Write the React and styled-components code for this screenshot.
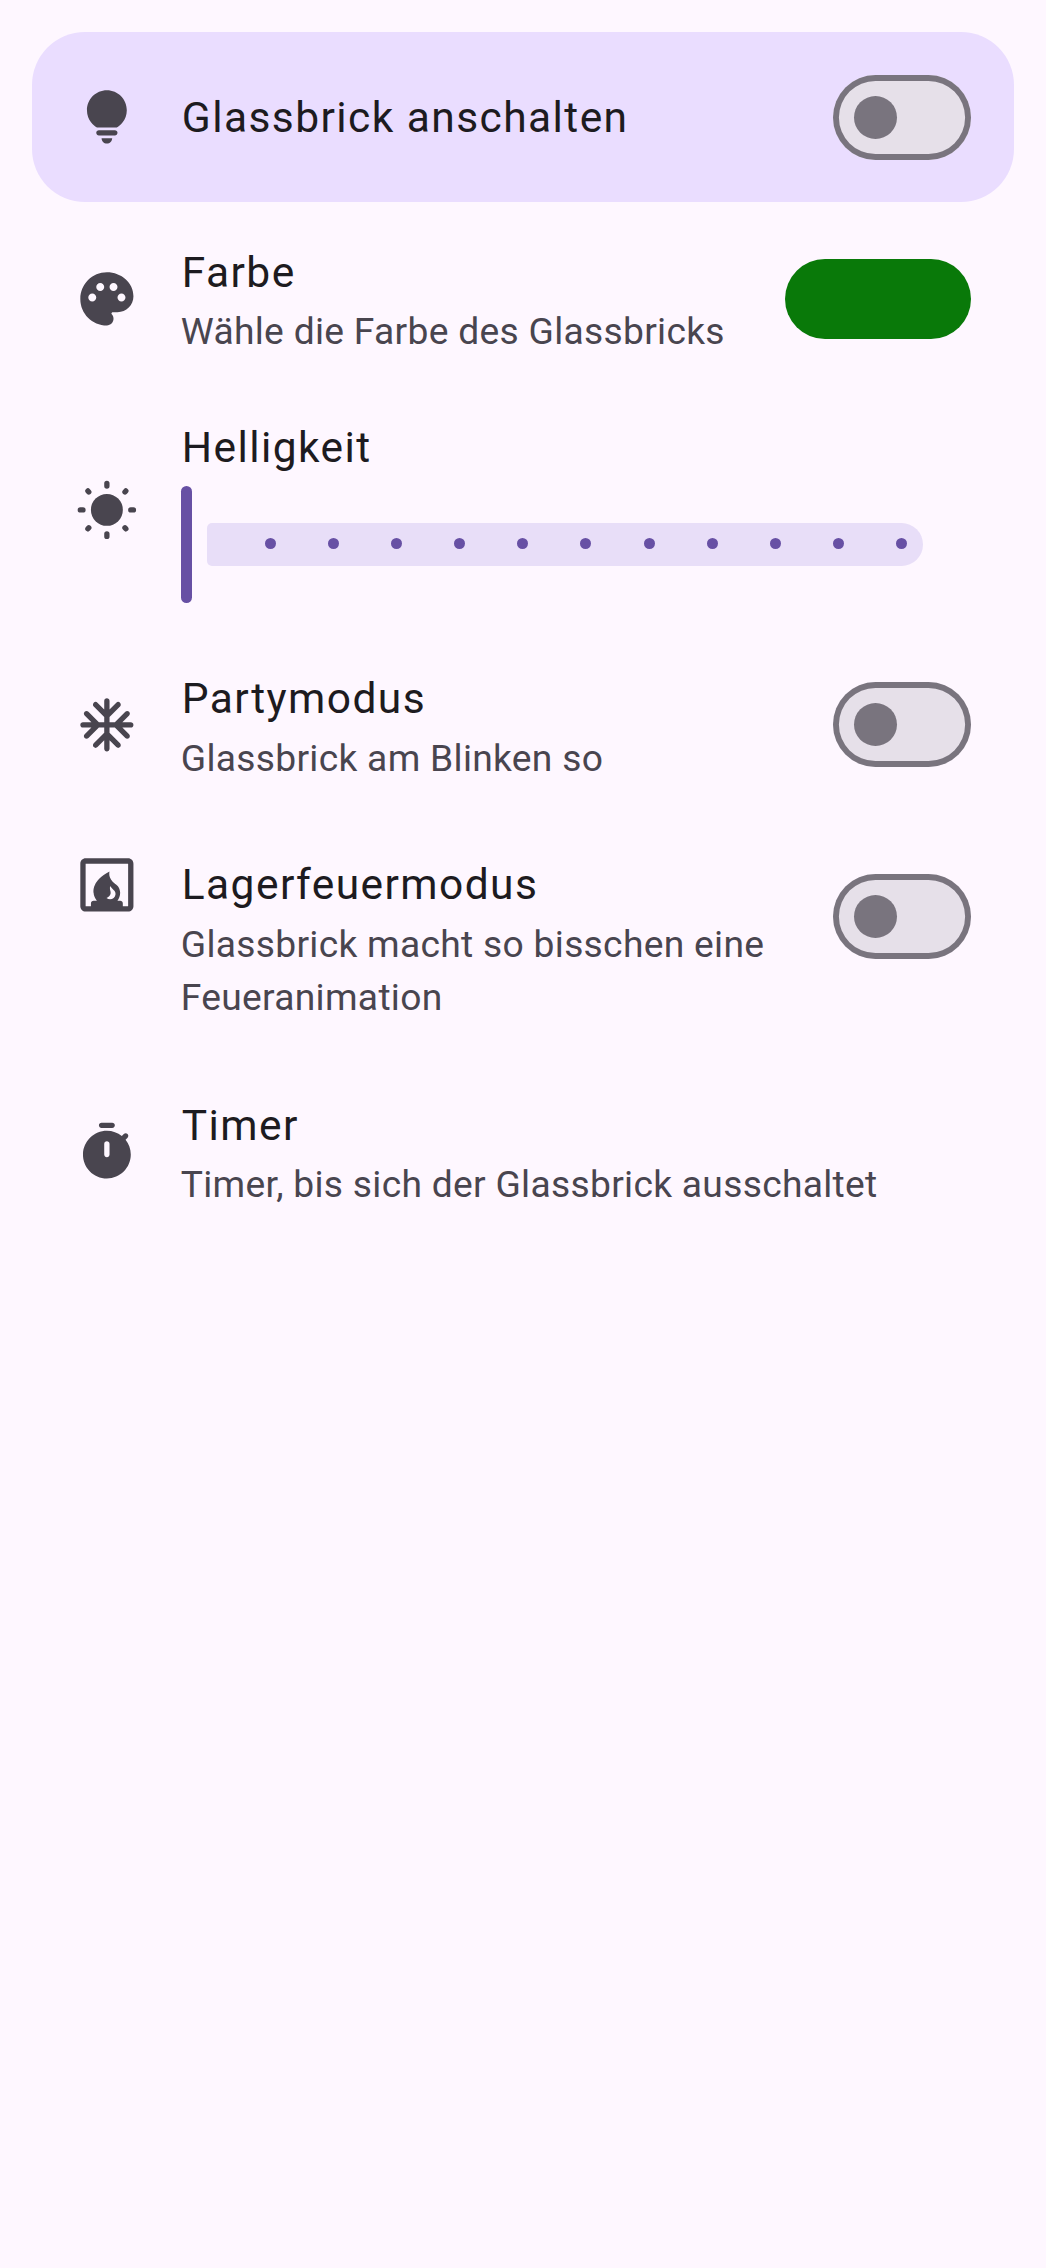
import React, { useState } from 'react';
import styled, { createGlobalStyle } from 'styled-components';

const GlobalStyle = createGlobalStyle`
  *, *::before, *::after { box-sizing: border-box; }
  body {
    margin: 0;
    background: #fef7ff;
    font-family: Roboto, "Noto Sans", sans-serif;
    color: #1d1b20;
  }
`;

const Screen = styled.main`
  display: flex;
  flex-direction: column;
  min-height: 2268px;
  padding: 32px;
  background: #fef7ff;
`;

const Body = styled.div`
  flex: 1;
  min-width: 0;
`;

const Item = styled.section`
  display: flex;
  align-items: ${(p) => (p.$top ? 'flex-start' : 'center')};
  gap: 42.5px;
  height: ${(p) => p.$height}px;
  padding: ${(p) => (p.$top ? '33.2px' : '0')} 43px ${(p) => p.$bottom || 0}px 42.5px;
  border-radius: 53px;
  background: ${(p) => (p.$highlighted ? '#eaddff' : 'transparent')};

  & > ${Body} {
    margin-top: ${(p) => (p.$top ? '-1px' : '0')};
  }
`;

const Icon = styled.svg`
  flex: none;
  width: 63.75px;
  height: 63.75px;
  fill: #49454f;
`;

const Title = styled.h2`
  margin: 0;
  padding: 1px 0 0 1px;
  font-size: 42.5px;
  font-weight: 400;
  line-height: 64px;
  letter-spacing: 1.43px;
  white-space: nowrap;
`;

const Subtitle = styled.p`
  margin: 0 0 ${(p) => (p.$spaced ? '-1px' : '0')};
  padding-top: ${(p) => (p.$spaced ? '1px' : '0')};
  color: #49454f;
  font-size: 37.2px;
  line-height: 53px;
  letter-spacing: 0.3px;
`;

const SwitchTarget = styled.div`
  display: flex;
  align-items: center;
  flex: none;
  height: 127.5px;
`;

const SwitchTrack = styled.button`
  display: flex;
  align-items: center;
  justify-content: ${(p) => (p.$on ? 'flex-end' : 'flex-start')};
  width: 138px;
  height: 85px;
  padding: 0 21.25px;
  border: 0;
  border-radius: 43px;
  background: ${(p) => (p.$on ? '#6750a4' : '#e6e0e9')};
  box-shadow: inset 0 0 0 5.9px ${(p) => (p.$on ? '#6750a4' : '#79747e')};
`;

const SwitchThumb = styled.span`
  width: 43px;
  height: 43px;
  border-radius: 50%;
  background: ${(p) => (p.$on ? '#ffffff' : '#79747e')};
`;

const ColorSwatch = styled.div`
  flex: none;
  width: 186.5px;
  height: 80px;
  border-radius: 40px;
  background: #097909;
`;

const Slider = styled.div`
  display: flex;
  align-items: center;
  gap: 15px;
  width: 742px;
  height: 117px;
  margin: 5.5px 0 1px;
`;

const SliderHandle = styled.div`
  width: 11px;
  height: 117px;
  border-radius: 5.5px;
  background: #6750a4;
`;

const SliderTrack = styled.div`
  display: flex;
  flex: 1;
  align-items: center;
  justify-content: space-between;
  height: 43px;
  padding: 0 15.6px 1px 58px;
  border-radius: 5px 21.5px 21.5px 5px;
  background: #e8def8;
`;

const Tick = styled.span`
  width: 11px;
  height: 11px;
  border-radius: 50%;
  background: #6750a4;
`;

const BulbIcon = () => (
  <Icon viewBox="0 0 24 24">
    <path d="M12 22c1.1 0 2-.9 2-2h-4c0 1.1.9 2 2 2zm-3-3h6c.55 0 1-.45 1-1s-.45-1-1-1H9c-.55 0-1 .45-1 1s.45 1 1 1zM12 2C7.86 2 4.5 5.36 4.5 9.5c0 3.82 2.66 5.86 3.77 6.5h7.46c1.11-.64 3.77-2.68 3.77-6.5C19.5 5.36 16.14 2 12 2z" />
  </Icon>
);

const PaletteIcon = () => (
  <Icon viewBox="0 0 24 24">
    <path d="M12 2C6.49 2 2 6.49 2 12s4.49 10 10 10c1.38 0 2.5-1.12 2.5-2.5 0-.61-.23-1.2-.64-1.67-.08-.1-.13-.21-.13-.33 0-.28.22-.5.5-.5H16c3.31 0 6-2.69 6-6 0-4.96-4.49-9-10-9zm5.5 11c-.83 0-1.5-.67-1.5-1.5s.67-1.5 1.5-1.5 1.5.67 1.5 1.5-.67 1.5-1.5 1.5zm-3-4c-.83 0-1.5-.67-1.5-1.5S13.67 6 14.5 6s1.5.67 1.5 1.5S15.33 9 14.5 9zM5 11.5c0-.83.67-1.5 1.5-1.5s1.5.67 1.5 1.5S7.33 13 6.5 13 5 12.33 5 11.5zm6-4c0 .83-.67 1.5-1.5 1.5S8 8.33 8 7.5 8.67 6 9.5 6s1.5.67 1.5 1.5z" />
  </Icon>
);

const SunIcon = () => (
  <Icon viewBox="0 0 24 24">
    <circle cx="12" cy="12" r="6" />
    <path
      d="M12 2v1M12 21v1M2 12h1M21 12h1M4.85 4.85l.35.4M19.15 4.85l-.35.4M4.85 19.15l.35-.4M19.15 19.15l-.35-.4"
      stroke="#49454f"
      strokeWidth="2"
      strokeLinecap="round"
    />
  </Icon>
);

const SnowflakeIcon = () => (
  <Icon viewBox="0 0 24 24">
    <path d="M21 11h-3.17l2.54-2.54c.39-.39.39-1.02 0-1.41-.39-.39-1.03-.39-1.42 0L15 11h-2V9l3.95-3.95c.39-.39.39-1.03 0-1.42-.39-.39-1.02-.39-1.41 0L13 6.17V3c0-.55-.45-1-1-1s-1 .45-1 1v3.17L8.46 3.63c-.39-.39-1.02-.39-1.41 0-.39.39-.39 1.03 0 1.42L11 9v2H9L5.05 7.05c-.39-.39-1.03-.39-1.42 0-.39.39-.39 1.02 0 1.41L6.17 11H3c-.55 0-1 .45-1 1s.45 1 1 1h3.17l-2.54 2.54c-.39.39-.39 1.02 0 1.41.39.39 1.03.39 1.42 0L9 13h2v2l-3.95 3.95c-.39.39-.39 1.03 0 1.42.39.39 1.02.39 1.41 0L11 17.83V21c0 .55.45 1 1 1s1-.45 1-1v-3.17l2.54 2.54c.39.39 1.02.39 1.41 0 .39-.39.39-1.03 0-1.42L13 15v-2h2l3.95 3.95c.39.39 1.03.39 1.42 0 .39-.39.39-1.02 0-1.41L17.83 13H21c.55 0 1-.45 1-1s-.45-1-1-1z" />
  </Icon>
);

const FireplaceIcon = () => (
  <Icon viewBox="0 0 24 24">
    <path d="M4 2c-1.1 0-2 .9-2 2v16c0 1.1.9 2 2 2h16c1.1 0 2-.9 2-2V4c0-1.1-.9-2-2-2H4zm7.86 14.96c.76-.24 1.4-1.04 1.53-1.63.13-.56-.1-1.05-.2-1.6-.08-.46-.07-.85.08-1.28.54 1.21 2.15 1.64 1.98 3.18-.19 1.69-2.11 2.37-3.39 1.33zM20 20h-2v-1c0-.55-.45-1-1-1h-1.02c.63-.84 1.02-1.87 1.02-3 0-1.89-1.09-2.85-1.85-3.37C12.2 9.61 13 7 13 7c-6.73 3.57-6.02 7.47-6 8 .03.96.49 2.07 1.23 3H7c-.55 0-1 .45-1 1v1H4V4h16v16z" />
  </Icon>
);

const TimerIcon = () => (
  <Icon viewBox="0 0 24 24">
    <path d="M14 1h-4c-.55 0-1 .45-1 1s.45 1 1 1h4c.55 0 1-.45 1-1s-.45-1-1-1zm5.03 6.39.75-.75c.38-.38.39-1.01 0-1.4l-.01-.01c-.39-.39-1.01-.38-1.4 0l-.75.75C16.07 4.74 14.12 4 12 4c-4.8 0-8.88 3.96-9 8.76C2.87 17.84 6.94 22 12 22c4.98 0 9-4.03 9-9 0-2.12-.74-4.07-1.97-5.61zM13 13c0 .55-.45 1-1 1s-1-.45-1-1V9c0-.55.45-1 1-1s1 .45 1 1v4z" />
  </Icon>
);

function Switch({ label }) {
  const [on, setOn] = useState(false);
  return (
    <SwitchTarget>
      <SwitchTrack
        type="button"
        role="switch"
        aria-checked={on}
        aria-label={label}
        $on={on}
        onClick={() => setOn(!on)}
      >
        <SwitchThumb $on={on} />
      </SwitchTrack>
    </SwitchTarget>
  );
}

const TICKS = Array.from({ length: 11 }, (_, i) => i + 1);

export default function App() {
  return (
    <>
      <GlobalStyle />
      <Screen>
        <Item $height={170} $highlighted>
          <BulbIcon />
          <Body>
            <Title>Glassbrick anschalten</Title>
          </Body>
          <Switch label="Glassbrick anschalten" />
        </Item>

        <Item $height={194}>
          <PaletteIcon />
          <Body>
            <Title>Farbe</Title>
            <Subtitle>Wähle die Farbe des Glassbricks</Subtitle>
          </Body>
          <ColorSwatch />
        </Item>

        <Item $height={234} $bottom={7}>
          <SunIcon />
          <Body>
            <Title>Helligkeit</Title>
            <Slider>
              <SliderHandle />
              <SliderTrack>
                {TICKS.map((t) => (
                  <Tick key={t} />
                ))}
              </SliderTrack>
            </Slider>
          </Body>
        </Item>

        <Item $height={189.8}>
          <SnowflakeIcon />
          <Body>
            <Title>Partymodus</Title>
            <Subtitle $spaced>Glassbrick am Blinken so</Subtitle>
          </Body>
          <Switch label="Partymodus" />
        </Item>

        <Item $height={235.2} $top>
          <FireplaceIcon />
          <Body>
            <Title>Lagerfeuermodus</Title>
            <Subtitle $spaced>Glassbrick macht so bisschen eine Feueranimation</Subtitle>
          </Body>
          <Switch label="Lagerfeuermodus" />
        </Item>

        <Item $height={194}>
          <TimerIcon />
          <Body>
            <Title>Timer</Title>
            <Subtitle>Timer, bis sich der Glassbrick ausschaltet</Subtitle>
          </Body>
        </Item>
      </Screen>
    </>
  );
}
